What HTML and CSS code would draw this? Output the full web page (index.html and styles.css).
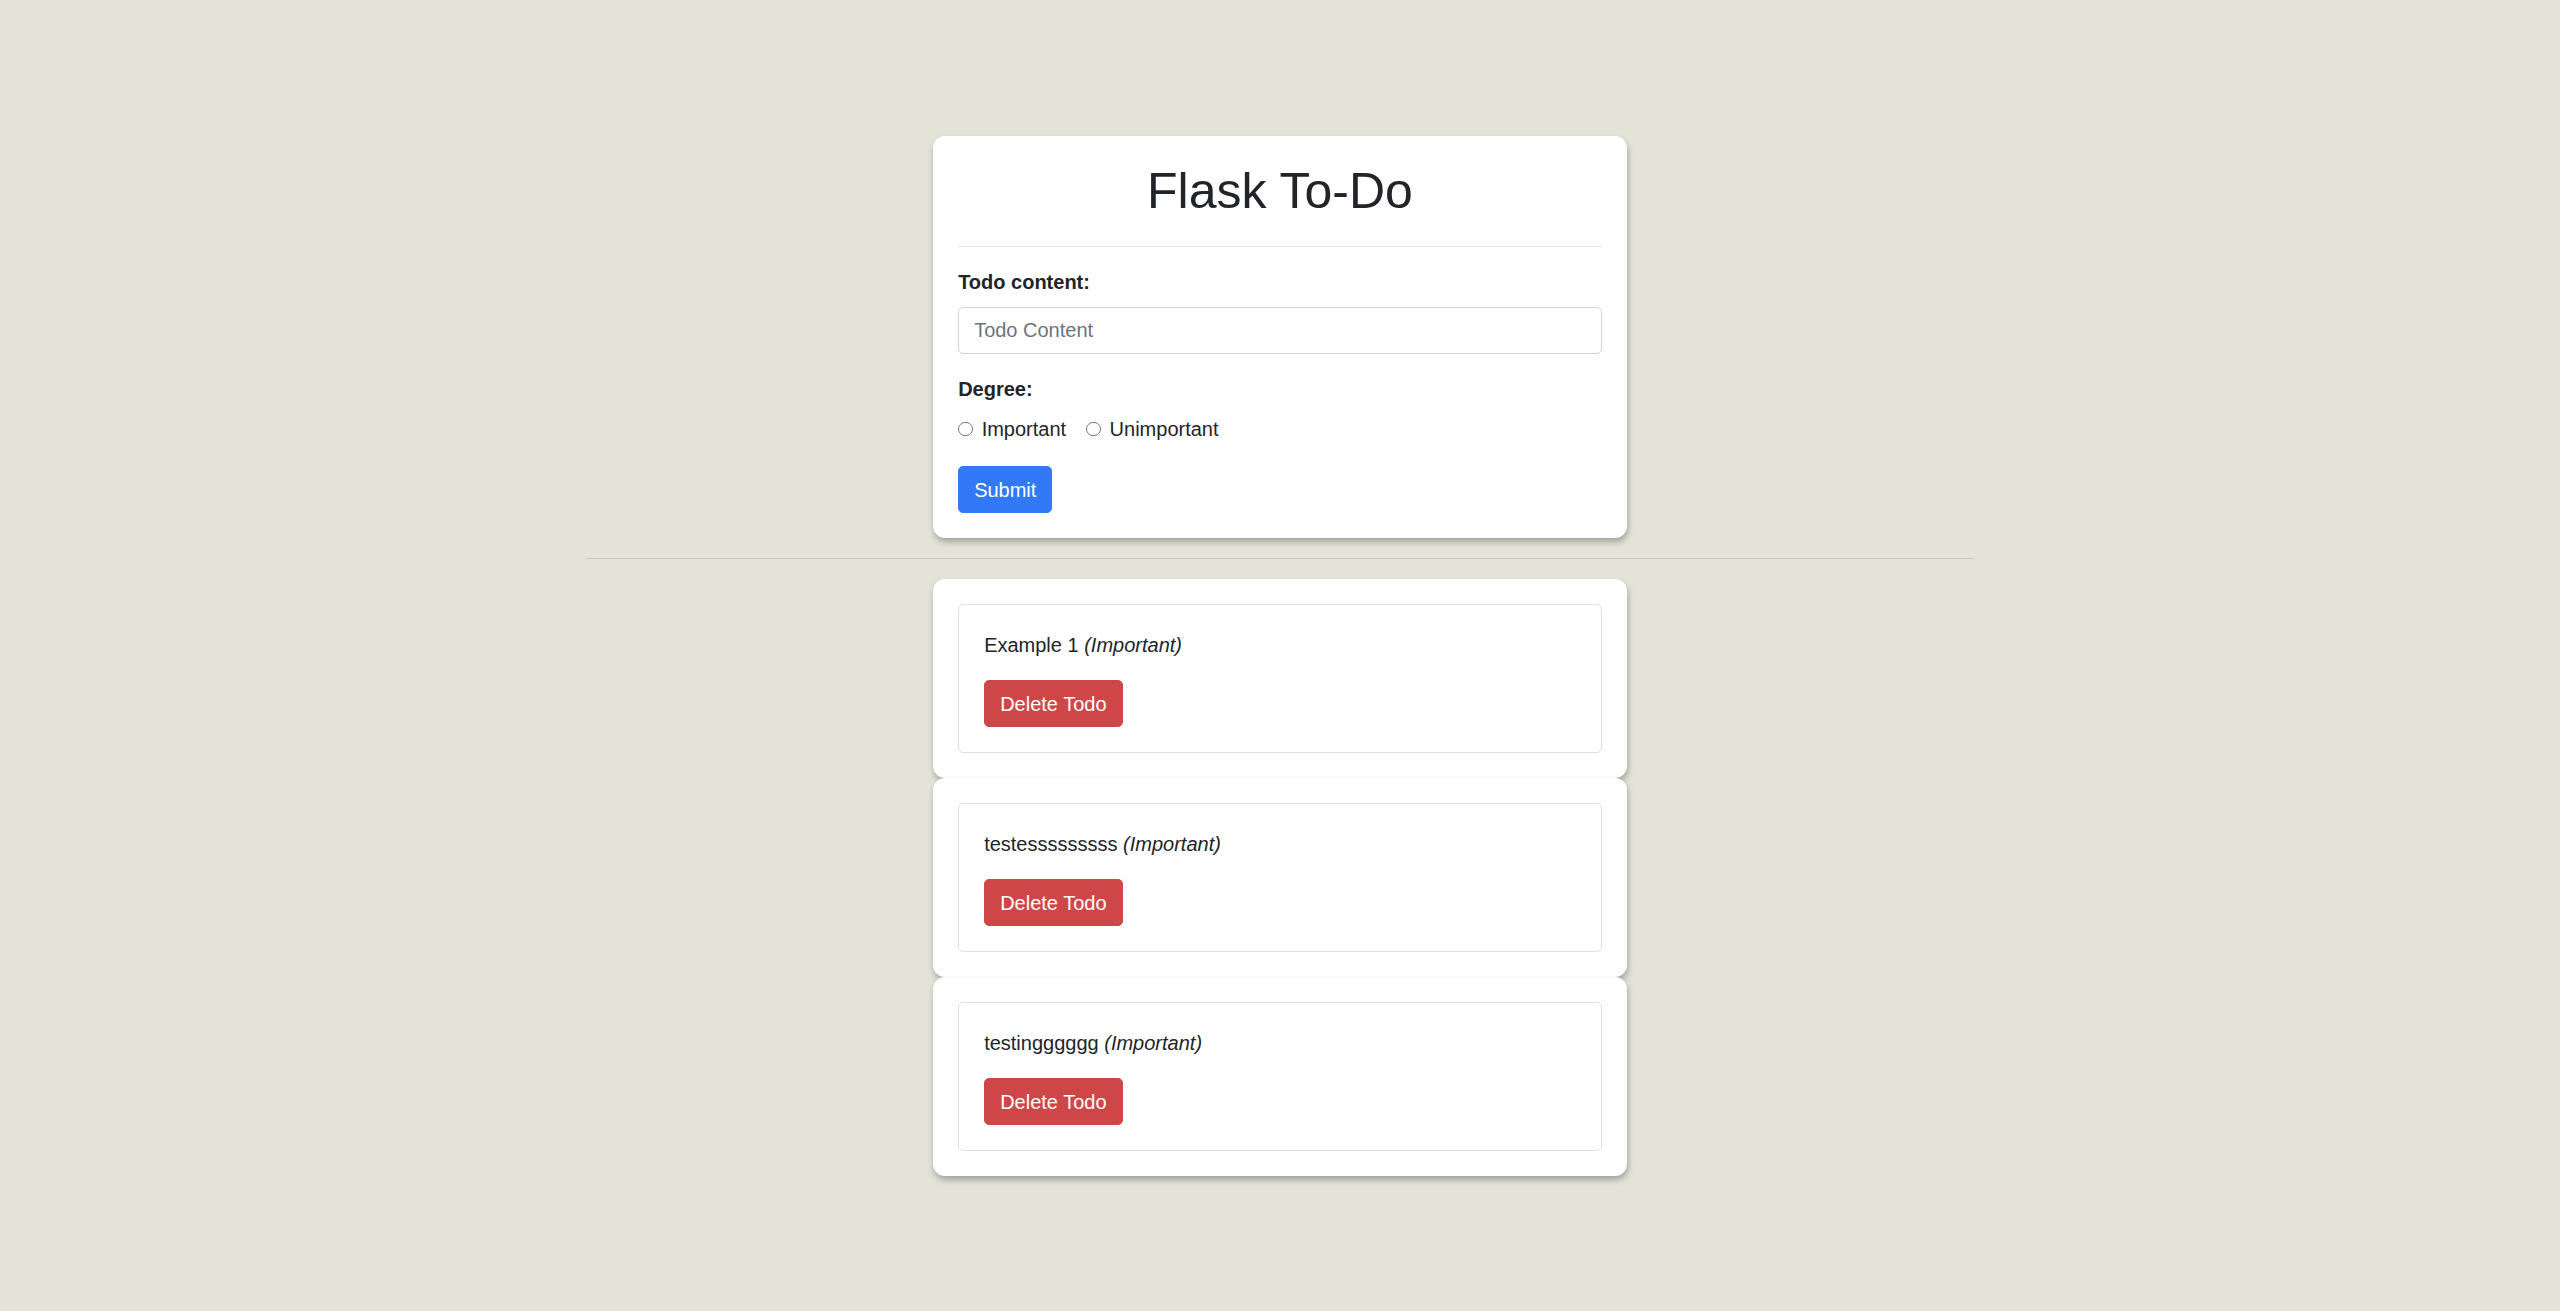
FILE: index.html
```html
<!DOCTYPE html>
<html lang="en">
<head>
<meta charset="utf-8">
<title>Flask To-Do</title>
<link rel="stylesheet" href="styles.css">
</head>
<body>
<div class="container">
  <div class="card">
    <div class="card-body">
      <h1 class="title">Flask To-Do</h1>
      <hr class="divider">
      <form class="todo-form">
        <div class="form-group">
          <label class="field-label" for="content">Todo content:</label>
          <input class="form-control" type="text" id="content" placeholder="Todo Content">
        </div>
        <div class="form-group">
          <label class="field-label">Degree:</label>
          <div class="radio-row">
            <label class="form-check"><input class="radio" type="radio" name="degree" value="Important"><span>Important</span></label>
            <label class="form-check"><input class="radio" type="radio" name="degree" value="Unimportant"><span>Unimportant</span></label>
          </div>
        </div>
        <button type="button" class="btn btn-primary">Submit</button>
      </form>
    </div>
  </div>

  <hr class="page-divider">

  <div class="card">
    <div class="card-body">
      <div class="todo-item">
        <p class="todo-text">Example 1 <em>(Important)</em></p>
        <button type="button" class="btn btn-danger">Delete Todo</button>
      </div>
    </div>
  </div>
  <div class="card">
    <div class="card-body">
      <div class="todo-item">
        <p class="todo-text">testesssssssss <em>(Important)</em></p>
        <button type="button" class="btn btn-danger">Delete Todo</button>
      </div>
    </div>
  </div>
  <div class="card">
    <div class="card-body">
      <div class="todo-item">
        <p class="todo-text">testingggggg <em>(Important)</em></p>
        <button type="button" class="btn btn-danger">Delete Todo</button>
      </div>
    </div>
  </div>
</div>
</body>
</html>
```

FILE: styles.css
```css
* { box-sizing: border-box; }

html, body {
  margin: 0;
  padding: 0;
}

body {
  background: #e3e3d8;
  font-family: "Liberation Sans", Arial, Helvetica, sans-serif;
  font-size: 20px;
  line-height: 1.5;
  color: #212529;
}

.container {
  max-width: 1425px;
  margin: 0 auto;
  padding: 136px 18.75px 40px;
}

.card {
  width: 50%;
  margin: 0 auto;
  background: #fff;
  border-radius: 12px;
  box-shadow: 1px 4px 6px rgba(0, 0, 0, 0.28);
  position: relative;
}

.card-body {
  padding: 25px;
}

.title {
  margin: 0 0 25px;
  font-size: 50px;
  font-weight: 400;
  line-height: 1.2;
  text-align: center;
  color: #212529;
}

.divider {
  margin: 0 0 20px;
  border: 0;
  border-top: 1px solid rgba(0, 0, 0, 0.1);
  height: 0;
}

.todo-form { margin: 0; }

.form-group {
  margin-bottom: 20px;
}

.form-group:nth-child(2) {
  margin-bottom: 22px;
}

.field-label {
  display: inline-block;
  margin-bottom: 10px;
  font-weight: 700;
}

.form-control {
  display: block;
  width: 100%;
  height: 47px;
  padding: 7.5px 15px;
  font-family: inherit;
  font-size: 20px;
  line-height: 1.5;
  color: #495057;
  background: #fff;
  border: 1px solid #ced4da;
  border-radius: 5px;
  outline: none;
}

.form-control::placeholder {
  color: #6c757d;
  opacity: 1;
}

.radio-row {
  display: flex;
  align-items: center;
}

.form-check {
  display: inline-flex;
  align-items: center;
  margin-right: 20px;
  line-height: 30px;
}

.radio {
  appearance: none;
  -webkit-appearance: none;
  width: 14.5px;
  height: 14.5px;
  margin: 0 9px 0 0;
  border: 1px solid #767676;
  border-radius: 50%;
  background: #fff;
}

.btn {
  display: inline-block;
  padding: 7.5px 15px;
  font-family: inherit;
  font-size: 20px;
  line-height: 1.5;
  font-weight: 400;
  border: 1px solid transparent;
  border-radius: 5px;
  color: #fff;
  cursor: pointer;
}

.btn-primary {
  background: #3179f6;
  border-color: #3179f6;
}

.btn-danger {
  background: #cf4649;
  border-color: #cf4649;
}

.page-divider {
  margin: 20px 0;
  border: 0;
  border-top: 1px solid rgba(0, 0, 0, 0.1);
  height: 0;
}

.todo-item {
  border: 1px solid rgba(0, 0, 0, 0.125);
  border-radius: 5px;
  padding: 25px;
}

.todo-text {
  margin: 0 0 20px;
}
```
